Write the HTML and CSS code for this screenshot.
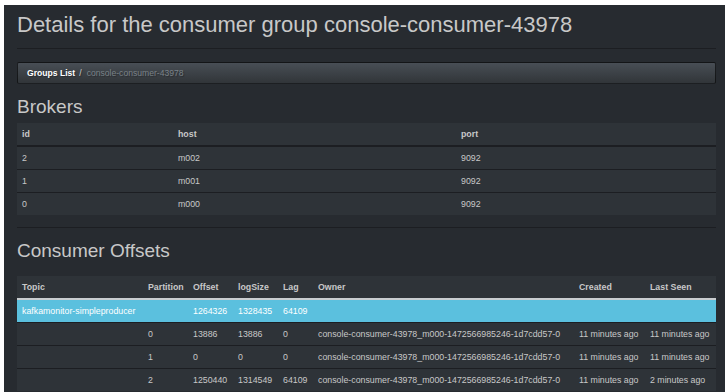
FILE: index.html
```html
<!DOCTYPE html>
<html>
<head>
<meta charset="utf-8">
<link rel="stylesheet" href="styles.css">
</head>
<body>
<div class="page">
  <div class="page-header">
    <h1 class="title">Details for the consumer group console-consumer-43978</h1>
  </div>
  <ol class="breadcrumb">
    <li class="crumb"><a class="crumb-link" href="#">Groups List</a></li>
    <li class="crumb crumb-active">console-consumer-43978</li>
  </ol>

  <h2 class="section-title">Brokers</h2>
  <table class="table brokers">
    <colgroup><col class="c-id"><col class="c-host"><col class="c-port"></colgroup>
    <thead>
      <tr><th>id</th><th>host</th><th>port</th></tr>
    </thead>
    <tbody>
      <tr><td>2</td><td>m002</td><td>9092</td></tr>
      <tr><td>1</td><td>m001</td><td>9092</td></tr>
      <tr><td>0</td><td>m000</td><td>9092</td></tr>
    </tbody>
  </table>

  <div class="divider"></div>

  <h2 class="section-title offsets-title">Consumer Offsets</h2>
  <table class="table offsets">
    <colgroup>
      <col class="c-topic"><col class="c-part"><col class="c-off"><col class="c-log"><col class="c-lag"><col class="c-owner"><col class="c-created"><col class="c-seen">
    </colgroup>
    <thead>
      <tr><th>Topic</th><th>Partition</th><th>Offset</th><th>logSize</th><th>Lag</th><th>Owner</th><th>Created</th><th>Last Seen</th></tr>
    </thead>
    <tbody>
      <tr class="info"><td>kafkamonitor-simpleproducer</td><td></td><td>1264326</td><td>1328435</td><td>64109</td><td></td><td></td><td></td></tr>
      <tr><td></td><td>0</td><td>13886</td><td>13886</td><td>0</td><td>console-consumer-43978_m000-1472566985246-1d7cdd57-0</td><td>11 minutes ago</td><td>11 minutes ago</td></tr>
      <tr><td></td><td>1</td><td>0</td><td>0</td><td>0</td><td>console-consumer-43978_m000-1472566985246-1d7cdd57-0</td><td>11 minutes ago</td><td>11 minutes ago</td></tr>
      <tr><td></td><td>2</td><td>1250440</td><td>1314549</td><td>64109</td><td>console-consumer-43978_m000-1472566985246-1d7cdd57-0</td><td>11 minutes ago</td><td>2 minutes ago</td></tr>
    </tbody>
  </table>
</div>
</body>
</html>
```
FILE: styles.css
```css
html, body {
  margin: 0;
  padding: 0;
  background: #ffffff;
}
body {
  font-family: "Liberation Sans", Arial, sans-serif;
  height: 392px;
  overflow: hidden;
}
.page {
  margin: 5px 3px 0 4px;
  padding: 8px 9px 20px 13px;
  background: #272b30;
  color: #c8c8c8;
  min-height: 400px;
  box-sizing: border-box;
}
.page-header {
  padding-bottom: 11px;
  border-bottom: 1px solid #1c1e22;
}
.title {
  margin: 0;
  font-size: 22px;
  line-height: 24px;
  font-weight: normal;
  color: #c8c8c8;
}
.breadcrumb {
  list-style: none;
  margin: 13px 0 0 0;
  padding: 4px 9px;
  display: flex;
  font-size: 8.6px;
  line-height: 12px;
  border: 1px solid rgba(0, 0, 0, 0.6);
  border-radius: 2px;
  background-image: linear-gradient(#484e55, #3a3f44 60%, #313539);
  text-shadow: 1px 1px 1px rgba(0, 0, 0, 0.3);
}
.crumb-link {
  color: #ffffff;
  font-weight: bold;
  text-decoration: none;
}
.crumb-active {
  color: #7a8288;
}
.crumb-active::before {
  content: "/";
  color: #cccccc;
  padding: 0 5px 0 4px;
}
.section-title {
  margin: 12px 0 6px 0;
  font-size: 19px;
  line-height: 21px;
  font-weight: normal;
  color: #c8c8c8;
}
.table {
  width: 100%;
  border-collapse: collapse;
  table-layout: fixed;
  background: #2e3338;
  font-size: 8.8px;
  line-height: 12px;
}
.table th, .table td {
  padding: 5px 5px;
  text-align: left;
  white-space: nowrap;
  overflow: hidden;
}
.table th {
  font-weight: bold;
  border-bottom: 2px solid #1c1e22;
}
.table tbody tr + tr td {
  border-top: 1px solid #1c1e22;
}
.c-id { width: 156px; }
.c-host { width: 283px; }
.divider {
  margin-top: 12px;
  border-top: 1px solid #1c1e22;
}
.offsets-title {
  margin: 12px 0 15px 0;
}
.offsets th {
  border-bottom-color: #c9cdd0;
}
.c-topic { width: 126px; }
.c-part { width: 45px; }
.c-off { width: 45px; }
.c-log { width: 45px; }
.c-lag { width: 35px; }
.c-owner { width: 261px; }
.c-created { width: 71px; }
.offsets .info td {
  background: #5bc0de;
  color: #ffffff;
}
```
